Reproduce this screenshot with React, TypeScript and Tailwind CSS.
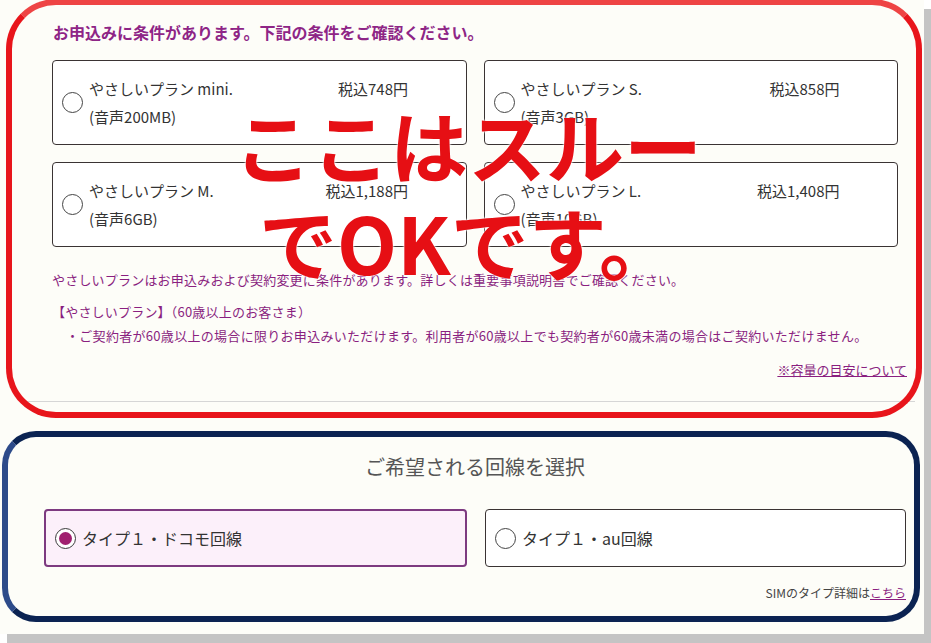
import React from 'react';

const plans = [
  { name: 'やさしいプラン mini.', price: '税込748円', data: '(音声200MB)' },
  { name: 'やさしいプラン S.', price: '税込858円', data: '(音声3GB)' },
  { name: 'やさしいプラン M.', price: '税込1,188円', data: '(音声6GB)' },
  { name: 'やさしいプラン L.', price: '税込1,408円', data: '(音声10GB)' },
];

function Radio({ checked }: { checked?: boolean }) {
  if (checked) {
    return (
      <span className="flex h-[21px] w-[21px] shrink-0 items-center justify-center rounded-full border-[1.5px] border-[#3a3a3a] bg-white">
        <span className="h-[13px] w-[13px] rounded-full bg-[#a0206f]"></span>
      </span>
    );
  }
  return <span className="h-[21px] w-[21px] shrink-0 rounded-full border border-[#444] bg-white"></span>;
}

export default function App() {
  return (
    <div className="h-[643px] w-[931px] overflow-hidden bg-white font-['Noto_Sans_CJK_JP','Noto_Sans',sans-serif]">
      <div className="relative h-[634px] w-[924px] bg-[#fdfdf8] shadow-[7px_9px_0_#c4c4c4]">
        {/* Conditions */}
        <div className="pt-[21px]">
          <h2 className="pl-[53px] text-[16px] font-bold leading-[22px] text-[#8e2586]">
            お申込みに条件があります。下記の条件をご確認ください。
          </h2>

          <div className="ml-[52px] mt-[17px] grid w-[846px] grid-cols-2 gap-[17px]">
            {plans.map((p) => (
              <label
                key={p.name}
                className="flex h-[85px] items-center gap-[6px] rounded-[4px] border border-[#3a3333] bg-white pl-[9px] text-[15px] leading-[28px] text-[#333]"
              >
                <Radio />
                <div>
                  <div className="flex w-[319px] justify-between">
                    <span>{p.name}</span>
                    <span>{p.price}</span>
                  </div>
                  <div>{p.data}</div>
                </div>
              </label>
            ))}
          </div>

          <p className="mt-[23px] pl-[52px] text-[13px] leading-[20px] tracking-[0.2px] text-[#8a1f80]">
            やさしいプランはお申込みおよび契約変更に条件があります。詳しくは重要事項説明書でご確認ください。
          </p>
          <p className="mt-[10px] pl-[52px] text-[13px] leading-[24px] tracking-[0.2px] text-[#8a1f80]">
            【やさしいプラン】（60歳以上のお客さま）
          </p>
          <p className="pl-[66px] text-[13px] leading-[24px] tracking-[0.3px] text-[#8a1f80]">
            ・ご契約者が60歳以上の場合に限りお申込みいただけます。利用者が60歳以上でも契約者が60歳未満の場合はご契約いただけません。
          </p>
          <div className="mt-[12px] pr-[17px] text-right text-[13px] leading-[20px]">
            <a className="text-[#8a1f80] underline">※容量の目安について</a>
          </div>
          <div className="ml-[20px] mr-[9px] mt-[21px] border-t border-[#d6d6d6]"></div>
        </div>

        {/* Line select */}
        <div className="pl-[44px] pr-[18px]">
          <h2 className="mt-[50px] text-center text-[20px] leading-[30px] text-[#555]">ご希望される回線を選択</h2>
          <div className="mt-[27px] grid grid-cols-[423px_421px] gap-[18px]">
            <label className="flex h-[58px] items-center gap-[6px] rounded-[4px] border-2 border-[#7d3a80] bg-[#fcf0fa] pl-[9px] text-[16px] text-[#333]">
              <Radio checked />
              <span>タイプ１・ドコモ回線</span>
            </label>
            <label className="flex h-[58px] items-center gap-[6px] rounded-[4px] border border-[#3a3333] bg-white pl-[9px] text-[16px] text-[#333]">
              <Radio />
              <span>タイプ１・au回線</span>
            </label>
          </div>
          <p className="mt-[17px] text-right text-[12px] leading-[18px] text-[#444]">
            SIMのタイプ詳細は<a className="text-[#8a1f80] underline">こちら</a>
          </p>
        </div>

        {/* Annotations */}
        <div className="pointer-events-none absolute left-[6px] top-[-1px] h-[419px] w-[916px] rounded-[50px] border-[6px] border-[#e8151b] border-t-[#ee4444]"></div>
        <div className="pointer-events-none absolute left-[2px] top-[431px] h-[191px] w-[918px] rounded-[34px] border-[6px] border-[#0b2352] border-l-[#2d4b8a]"></div>
        <div className="pointer-events-none absolute left-0 top-[96px] w-[936px] text-center text-[78px] font-bold leading-[97px] text-[#e60f14] [text-shadow:0_0_3px_#fff,0_0_2px_#fff]">
          <div>ここはスルー</div>
          <div>でOKです。</div>
        </div>
      </div>
    </div>
  );
}
